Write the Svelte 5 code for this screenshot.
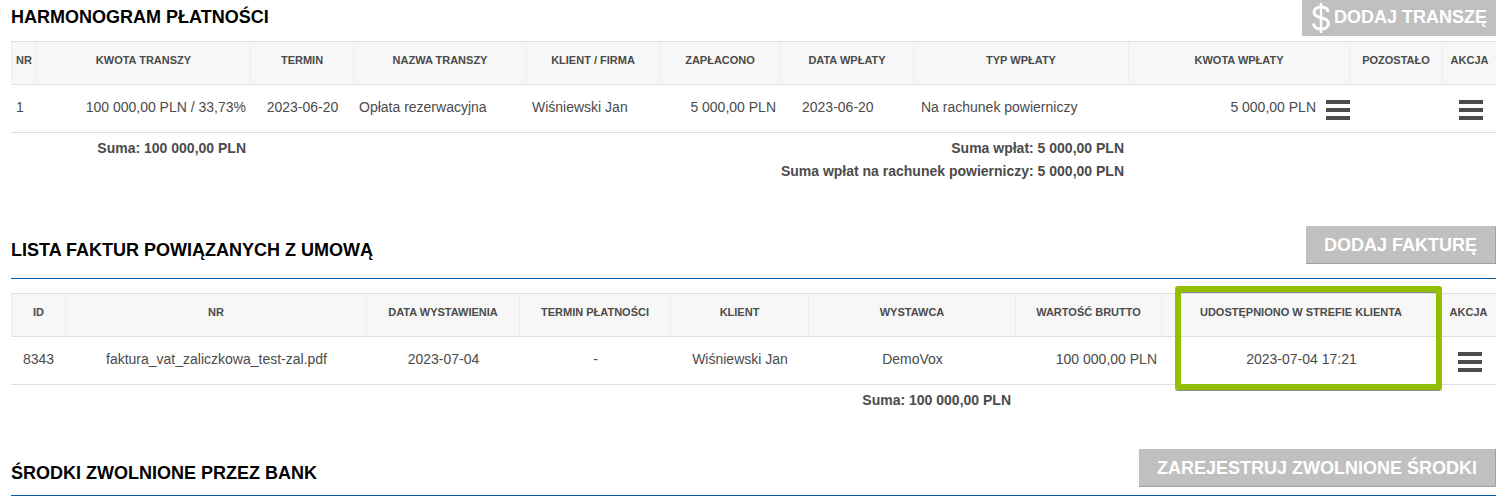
<script lang="ts">
	interface Column {
		label: string;
		width: number;
		marked?: boolean;
	}

	const trancheColumns: Column[] = [
		{ label: 'NR', width: 26 },
		{ label: 'KWOTA TRANSZY', width: 214 },
		{ label: 'TERMIN', width: 103 },
		{ label: 'NAZWA TRANSZY', width: 173 },
		{ label: 'KLIENT / FIRMA', width: 133 },
		{ label: 'ZAPŁACONO', width: 121 },
		{ label: 'DATA WPŁATY', width: 133 },
		{ label: 'TYP WPŁATY', width: 215 },
		{ label: 'KWOTA WPŁATY', width: 221 },
		{ label: 'POZOSTAŁO', width: 93 },
		{ label: 'AKCJA', width: 53 }
	];

	const invoiceColumns: Column[] = [
		{ label: 'ID', width: 55 },
		{ label: 'NR', width: 301 },
		{ label: 'DATA WYSTAWIENIA', width: 153 },
		{ label: 'TERMIN PŁATNOŚCI', width: 151 },
		{ label: 'KLIENT', width: 138 },
		{ label: 'WYSTAWCA', width: 207 },
		{ label: 'WARTOŚĆ BRUTTO', width: 146 },
		{ label: 'UDOSTĘPNIONO W STREFIE KLIENTA', width: 279, marked: true },
		{ label: 'AKCJA', width: 55 }
	];

	const tranches = [
		{
			nr: 1,
			amount: '100 000,00 PLN / 33,73%',
			due: '2023-06-20',
			name: 'Opłata rezerwacyjna',
			client: 'Wiśniewski Jan',
			paid: '5 000,00 PLN',
			paymentDate: '2023-06-20',
			paymentType: 'Na rachunek powierniczy',
			payment: '5 000,00 PLN',
			left: ''
		}
	];

	const invoices = [
		{
			id: 8343,
			nr: 'faktura_vat_zaliczkowa_test-zal.pdf',
			issued: '2023-07-04',
			due: '-',
			client: 'Wiśniewski Jan',
			issuer: 'DemoVox',
			gross: '100 000,00 PLN',
			shared: '2023-07-04 17:21'
		}
	];
</script>

{#snippet head(columns: Column[])}
	<colgroup>
		{#each columns as column}
			<col style="width: {column.width}px" />
		{/each}
	</colgroup>
	<thead>
		<tr>
			{#each columns as column}
				<th scope="col" class:marked={column.marked}>
					{column.label}
					{#if column.marked}<span class="frame"></span>{/if}
				</th>
			{/each}
		</tr>
	</thead>
{/snippet}

{#snippet menu(label: string)}
	<button type="button" class="menu" aria-label={label}>
		<svg width="24" height="20" viewBox="0 0 24 20" aria-hidden="true">
			<path d="M0 0h24v4H0zM0 8h24v4H0zM0 16h24v4H0z" fill="currentColor" />
		</svg>
	</button>
{/snippet}

<main>
	<section class="schedule">
		<header class="top">
			<h2>HARMONOGRAM PŁATNOŚCI</h2>
			<button type="button" class="add with-icon">
				<svg width="20" height="30" viewBox="0 0 20 30" fill="none" stroke="#fff" aria-hidden="true">
					<path d="M17 9C17 5.500 14 4 10 4S3 6 3 9.300c0 3.500 3 4.500 7 5.400s7.500 2 7.500 5.900c0 3.400-3.200 5.400-7.500 5.400S2.500 24 2.500 20.500" stroke-width="3" />
					<path d="M10 0v30" stroke-width="2.500" />
				</svg>
				DODAJ TRANSZĘ
			</button>
		</header>
		<table>
			{@render head(trancheColumns)}
			<tbody>
				{#each tranches as row}
					<tr>
						<td>{row.nr}</td>
						<td class="right">{row.amount}</td>
						<td class="center">{row.due}</td>
						<td>{row.name}</td>
						<td>{row.client}</td>
						<td class="right">{row.paid}</td>
						<td class="payment-date">{row.paymentDate}</td>
						<td class="payment-type">{row.paymentType}</td>
						<td class="payment">
							<div>
								{row.payment}
								{@render menu('Akcje wpłaty')}
							</div>
						</td>
						<td class="right">{row.left}</td>
						<td class="action">{@render menu('Akcje transzy')}</td>
					</tr>
				{/each}
			</tbody>
			<tfoot>
				<tr>
					<td colspan="2">Suma: 100 000,00 PLN</td>
					<td colspan="6">
						Suma wpłat: 5 000,00 PLN<br />
						Suma wpłat na rachunek powierniczy: 5 000,00 PLN
					</td>
					<td colspan="3"></td>
				</tr>
			</tfoot>
		</table>
	</section>

	<section class="invoices">
		<header class="ruled">
			<h2>LISTA FAKTUR POWIĄZANYCH Z UMOWĄ</h2>
			<button type="button" class="add">DODAJ FAKTURĘ</button>
		</header>
		<table>
			{@render head(invoiceColumns)}
			<tbody>
				{#each invoices as row}
					<tr>
						<td class="center">{row.id}</td>
						<td class="center">{row.nr}</td>
						<td class="center">{row.issued}</td>
						<td class="center">{row.due}</td>
						<td class="center">{row.client}</td>
						<td class="center">{row.issuer}</td>
						<td class="right">{row.gross}</td>
						<td class="center">{row.shared}</td>
						<td class="action">{@render menu('Akcje faktury')}</td>
					</tr>
				{/each}
			</tbody>
			<tfoot>
				<tr>
					<td colspan="6">Suma: 100 000,00 PLN</td>
					<td colspan="3"></td>
				</tr>
			</tfoot>
		</table>
	</section>

	<section>
		<header class="ruled tight">
			<h2>ŚRODKI ZWOLNIONE PRZEZ BANK</h2>
			<button type="button" class="add">ZAREJESTRUJ ZWOLNIONE ŚRODKI</button>
		</header>
	</section>
</main>

<style>
	:global(body) {
		margin: 0;
		background: #fff;
	}

	main {
		padding: 0 10px 0 11px;
		font-family: "Liberation Sans", Arial, sans-serif;
		font-size: 14px;
		line-height: 20px;
		color: #4b4b4b;
	}

	header {
		display: flex;
		justify-content: space-between;
		align-items: flex-end;
	}

	.top {
		align-items: flex-start;
		margin-bottom: 5px;
	}

	.top h2 {
		line-height: 34px;
	}

	.ruled {
		padding-bottom: 14px;
		border-bottom: 1px solid #005aa9;
	}

	.tight {
		padding-bottom: 8px;
	}

	.schedule {
		margin-bottom: 39px;
	}

	.invoices {
		margin-bottom: 33px;
	}

	.invoices table {
		margin-top: 14px;
	}

	h2 {
		margin: 0;
		font-size: 18px;
		line-height: 28px;
		color: #000;
	}

	button {
		font-family: inherit;
		cursor: pointer;
	}

	.add {
		height: 38px;
		padding: 0 18px;
		border: solid #a0a0a0;
		border-width: 0 1px 1px 0;
		background: #c0c0c0;
		font-size: 18px;
		font-weight: bold;
		line-height: 34px;
		color: #fff;
	}

	.with-icon {
		display: flex;
		align-items: flex-start;
		gap: 3px;
		height: 36px;
		padding: 0 9px;
		border: 0;
	}

	.with-icon svg {
		margin-top: 3px;
	}

	table {
		width: 100%;
		table-layout: fixed;
		border-collapse: separate;
		border-spacing: 0;
	}

	th {
		height: 44px;
		box-sizing: border-box;
		padding: 0 2px 6px;
		border: solid #ddd;
		border-width: 1px 1px 1px 0;
		border-right-color: #eee;
		background: #f7f7f7;
		font-size: 11px;
		line-height: 14px;
		white-space: nowrap;
	}

	th:first-child {
		border-left: 1px solid #eee;
	}

	th:last-child {
		border-right: 0;
	}

	.marked {
		position: relative;
	}

	/* highlight around the whole column, header and rows */
	.frame {
		position: absolute;
		top: -8px;
		left: 13px;
		right: -2px;
		height: 104px;
		box-sizing: border-box;
		border: 6px solid #92c000;
		border-radius: 3px;
		box-shadow: 0 1px 0 #888, inset 0 1px 0 #888;
		z-index: 1;
		pointer-events: none;
	}

	td {
		height: 48px;
		box-sizing: border-box;
		padding: 12px 5px 10px;
		border-bottom: 1px solid #ddd;
		vertical-align: top;
		white-space: nowrap;
	}

	.right {
		text-align: right;
	}

	.center {
		text-align: center;
	}

	.payment-date {
		padding-left: 21px;
	}

	.payment-type {
		padding-left: 7px;
	}

	.payment {
		padding-right: 0;
	}

	.payment div {
		display: flex;
		justify-content: flex-end;
		gap: 10px;
	}

	.action {
		padding-left: 8px;
	}

	.menu {
		display: block;
		padding: 3px 0 0;
		border: 0;
		background: none;
		color: #4b4b4b;
	}

	.action .menu {
		margin: 0 auto;
	}

	.menu svg {
		display: block;
	}

	tfoot td {
		height: auto;
		padding: 4px 5px;
		border: 0;
		font-weight: bold;
		line-height: 23px;
		text-align: right;
	}
</style>
